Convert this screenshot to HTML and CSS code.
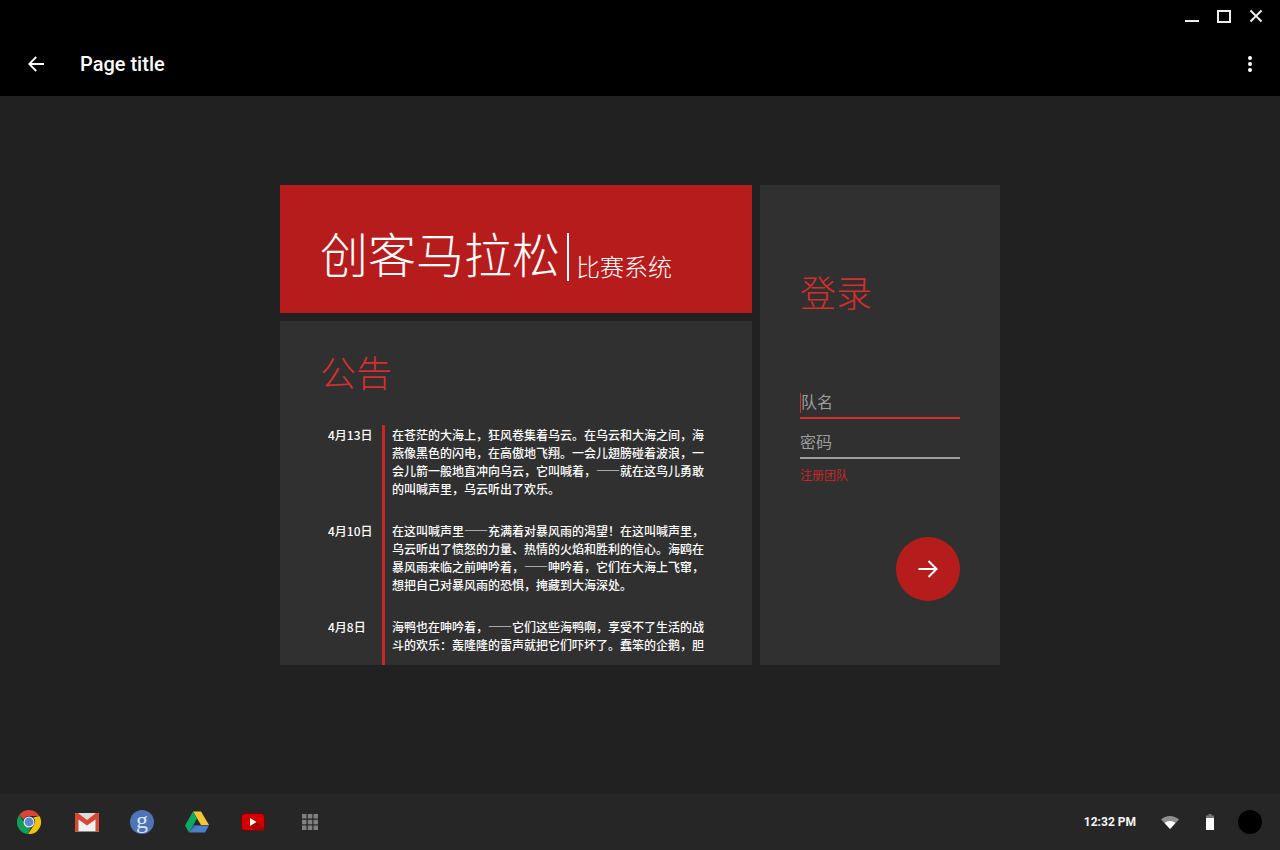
FILE: index.html
```html
<!DOCTYPE html>
<html lang="zh-CN">
<head>
<meta charset="utf-8">
<title>创客马拉松</title>
<link rel="stylesheet" href="styles.css">
</head>
<body>
<div class="app">
  <header class="titlebar">
    <div class="window-controls">
      <svg class="win-icon" viewBox="0 0 32 32"><rect x="9" y="20" width="14" height="2" fill="#eee"/></svg>
      <svg class="win-icon" viewBox="0 0 32 32"><rect x="10" y="11" width="12" height="11" fill="none" stroke="#eee" stroke-width="2"/></svg>
      <svg class="win-icon" viewBox="0 0 32 32"><path d="M10.500 10.500L21.500 21.500M21.500 10.500L10.500 21.500" stroke="#eee" stroke-width="2" fill="none"/></svg>
    </div>
    <div class="toolbar">
      <svg class="back" viewBox="0 0 16 16"><path d="M1.200 8H16M8.200 1L1.200 8L8.200 15" fill="none" stroke="#fff" stroke-width="1.800"/></svg>
      <h1 class="page-title">Page title</h1>
      <div class="dots"><span></span><span></span><span></span></div>
    </div>
  </header>

  <main class="stage">
    <div class="board">
      <div class="left-col">
        <section class="hero">
          <span class="hero-main">创客马拉松</span><span class="hero-sub">比赛系统</span>
        </section>
        <section class="notice">
          <h2 class="heading notice-heading">公告</h2>
          <div class="timeline">
            <article class="entry">
              <div class="date">4月13日</div>
              <p class="body">在苍茫的大海上，狂风卷集着乌云。在乌云和大海之间，海燕像黑色的闪电，在高傲地飞翔。一会儿翅膀碰着波浪，一会儿箭一般地直冲向乌云，它叫喊着，——就在这鸟儿勇敢的叫喊声里，乌云听出了欢乐。</p>
            </article>
            <article class="entry">
              <div class="date">4月10日</div>
              <p class="body">在这叫喊声里——充满着对暴风雨的渴望！在这叫喊声里，乌云听出了愤怒的力量、热情的火焰和胜利的信心。海鸥在暴风雨来临之前呻吟着，——呻吟着，它们在大海上飞窜，想把自己对暴风雨的恐惧，掩藏到大海深处。</p>
            </article>
            <article class="entry">
              <div class="date">4月8日</div>
              <p class="body">海鸭也在呻吟着，——它们这些海鸭啊，享受不了生活的战斗的欢乐：轰隆隆的雷声就把它们吓坏了。蠢笨的企鹅，胆</p>
            </article>
          </div>
        </section>
      </div>
      <aside class="login">
        <h2 class="heading login-heading">登录</h2>
        <div class="field field-active"><span class="caret"></span><span class="placeholder">队名</span></div>
        <div class="field"><span class="placeholder">密码</span></div>
        <div class="register">注册团队</div>
        <div class="fab-row">
          <div class="fab">
            <svg class="fab-icon" viewBox="0 0 20 20"><path d="M0.500 10H18M10.500 2L18.500 10L10.500 18" fill="none" stroke="#fff" stroke-width="2"/></svg>
          </div>
        </div>
      </aside>
    </div>
  </main>

  <footer class="shelf">
    <div class="launcher">
      <svg class="app-icon" viewBox="0 0 24 24">
        <path d="M12 0A12 12 0 0 1 22.400 6H12A6 6 0 0 0 6.400 9.800L2.400 4.800A12 12 0 0 1 12 0Z" fill="#db4437"/>
        <path d="M22.400 6A12 12 0 0 1 11 24L16.800 15.200A6 6 0 0 0 16.200 7.500L22.400 6Z" fill="#f4c20d"/>
        <path d="M2.400 4.800L7.800 13.800A6 6 0 0 0 14 17.600L11 24A12 12 0 0 1 2.400 4.800Z" fill="#0f9d58"/>
        <circle cx="12" cy="12" r="5.500" fill="#f1f1f1"/><circle cx="12" cy="12" r="4.400" fill="#5b89cf"/>
      </svg>
      <svg class="app-icon app-gmail" viewBox="0 0 24 24">
        <path d="M0 3H24V21.500H0Z" fill="#f0f0f0"/>
        <path d="M0 3H24L12 12Z" fill="#dcdcdc"/>
        <path d="M0 3.500A1 1 0 0 1 1 3H3L12 10L21 3H23A1 1 0 0 1 24 4V20.500A1 1 0 0 1 23 21.500H20.500V9.500L12 15.500L3.500 9.500V21.500H1A1 1 0 0 1 0 20.500Z" fill="#d34836"/>
      </svg>
      <div class="app-icon g-badge"><span class="g-letter">g</span></div>
      <svg class="app-icon" viewBox="0 0 24 24">
        <path d="M8 1.500H16L24 15H16Z" fill="#f6c533"/>
        <path d="M8 1.500L12 8.500L4 22.500L0 15.500Z" fill="#0da960"/>
        <path d="M8.500 15.500H24L20 22.500H4.200Z" fill="#4a7fc9"/>
        <path d="M4 22.500L8.500 15.500H12Z" fill="#3e6a9e"/>
      </svg>
      <svg class="app-icon app-youtube" viewBox="0 0 24 24">
        <rect x="0.500" y="3.500" width="23" height="17" rx="3.500" fill="#d40000" stroke="#6d0000" stroke-width=".8"/>
        <path d="M15.500 12L23 18V19A1.500 1.500 0 0 1 21.500 20.500H14L9 16Z" fill="#a90000"/>
        <path d="M9 8L15.500 12L9 16Z" fill="#fff"/>
      </svg>
      <svg class="app-icon app-grid" viewBox="0 0 24 24">
        <g class="apps-grid">
          <rect x="4" y="4" width="4.500" height="4.500"/><rect x="9.800" y="4" width="4.500" height="4.500"/><rect x="15.500" y="4" width="4.500" height="4.500"/>
          <rect x="4" y="9.800" width="4.500" height="4.500"/><rect x="9.800" y="9.800" width="4.500" height="4.500"/><rect x="15.500" y="9.800" width="4.500" height="4.500"/>
          <rect x="4" y="15.500" width="4.500" height="4.500"/><rect x="9.800" y="15.500" width="4.500" height="4.500"/><rect x="15.500" y="15.500" width="4.500" height="4.500"/>
        </g>
      </svg>
    </div>
    <div class="tray">
      <span class="clock">12:32 PM</span>
      <svg class="wifi" viewBox="0 0 18 14"><path d="M0 4.500A13 13 0 0 1 18 4.500L9 14Z" fill="#8f8f8f"/><path d="M3.600 8A8 8 0 0 1 14.400 8L9 14Z" fill="#fff"/></svg>
      <svg class="battery" viewBox="0 0 8 16"><path d="M2.500 0H5.500V1.500H8V16H0V1.500H2.500Z" fill="#777"/><rect y="4" width="8" height="12" fill="#fff"/></svg>
      <span class="avatar"></span>
    </div>
  </footer>
</div>
</body>
</html>
```

FILE: styles.css
```css
* { box-sizing: border-box; }
html, body { margin: 0; height: 100%; }
body {
  background: #212121;
  font-family: "Noto Sans CJK SC", Roboto, sans-serif;
  color: #fff;
}
.app { height: 850px; display: flex; flex-direction: column; overflow: hidden; }

.titlebar { height: 96px; background: #000; display: flex; flex-direction: column; flex: none; }
.window-controls { height: 32px; display: flex; justify-content: flex-end; padding-right: 8px; }
.win-icon { width: 32px; height: 32px; display: block; }
.toolbar { height: 64px; display: flex; align-items: center; padding: 0 20px 0 28px; }
.back { width: 16px; height: 16px; margin-right: 36px; }
.page-title { margin: 0; flex: 1; font: 500 20px/28px Roboto, sans-serif; color: #fff; }
.dots { display: flex; flex-direction: column; gap: 2px; width: 20px; align-items: center; }
.dots span { width: 4px; height: 4px; border-radius: 50%; background: #fff; }

.stage { flex: 1; padding-top: 89px; display: flex; justify-content: center; align-items: flex-start; }
.board { width: 720px; height: 480px; display: flex; gap: 8px; }
.left-col { width: 472px; display: flex; flex-direction: column; gap: 8px; }

.hero {
  height: 128px; flex: none; background: #b71c1c; padding: 48px 0 32px 40px;
  display: flex; align-items: flex-end;
}
.hero-main {
  font-size: 48px; line-height: 38px; font-weight: 300; padding-right: 7px;
  border-right: 2px solid #fff; height: 48px; display: block;
}
.hero-sub { font-size: 24px; line-height: 24px; font-weight: 300; margin-left: 7px; padding-bottom: 3px; }

.notice, .login { background: #303030; }
.notice { flex: 1; min-height: 0; overflow: hidden; padding: 30px 48px 0 40px; }
.heading { margin: 0; font-size: 36px; line-height: 40px; font-weight: 300; color: #d32f2f; }

.timeline { margin-top: 34px; display: flex; flex-direction: column; }
.entry { display: flex; }
.date { width: 62px; flex: none; padding: 0 0 0 8px; font-size: 12px; line-height: 18px; color: #fff; font-weight: 500; }
.body {
  margin: 0; width: 322px; padding: 0 0 24px 7px; border-left: 3px solid #c62828;
  font-size: 12px; line-height: 18px; font-weight: 500; color: #fff;
}
.entry:first-child .body, .entry:first-child .date { padding-top: 1px; }

.login { width: 240px; padding: 86px 40px 0; display: flex; flex-direction: column; }
.login-heading { margin-bottom: 78px; }
.field {
  height: 30px; border-bottom: 2px solid #9e9e9e; margin-bottom: 10px; padding-bottom: 4px;
  display: flex; align-items: center; position: relative;
}
.field-active { border-bottom-color: #d32f2f; padding-left: 1px; }
.caret { position: absolute; left: 0; top: 4px; width: 1px; height: 20px; background: #d32f2f; }
.placeholder { font-size: 16px; line-height: 24px; color: #9e9e9e; font-weight: 400; }
.register { font-size: 12px; line-height: 16px; color: #c62828; margin-top: -2px; }
.fab-row { display: flex; justify-content: flex-end; margin-top: 54px; }
.fab { width: 64px; height: 64px; border-radius: 50%; background: #b71c1c; display: flex; align-items: center; justify-content: center; }
.fab-icon { width: 20px; height: 20px; }

.shelf {
  height: 56px; flex: none; background: #262626; display: flex; align-items: center;
  justify-content: space-between; padding: 0 18px 0 17px;
}
.launcher { display: flex; align-items: center; gap: 31px; }
.app-icon { width: 24px; height: 24px; display: block; flex: none; }
.app-gmail { margin-left: 3px; }
.app-youtube { margin-left: 1px; }
.app-grid { margin-left: 2px; }
.g-badge { border-radius: 50%; background: #4d73b8; display: flex; justify-content: center; }
.g-letter { font: 400 24px/20px "Liberation Serif", serif; color: #dfe6f3; }
.apps-grid { fill: #808080; }
.tray { display: flex; align-items: center; }
.clock { font: 700 12px/16px Roboto, sans-serif; color: #f5f5f5; margin-right: 25px; }
.wifi { width: 18px; height: 14px; margin-right: 27px; }
.battery { width: 8px; height: 16px; margin-right: 24px; }
.avatar { width: 24px; height: 24px; border-radius: 50%; background: #000; }
```
